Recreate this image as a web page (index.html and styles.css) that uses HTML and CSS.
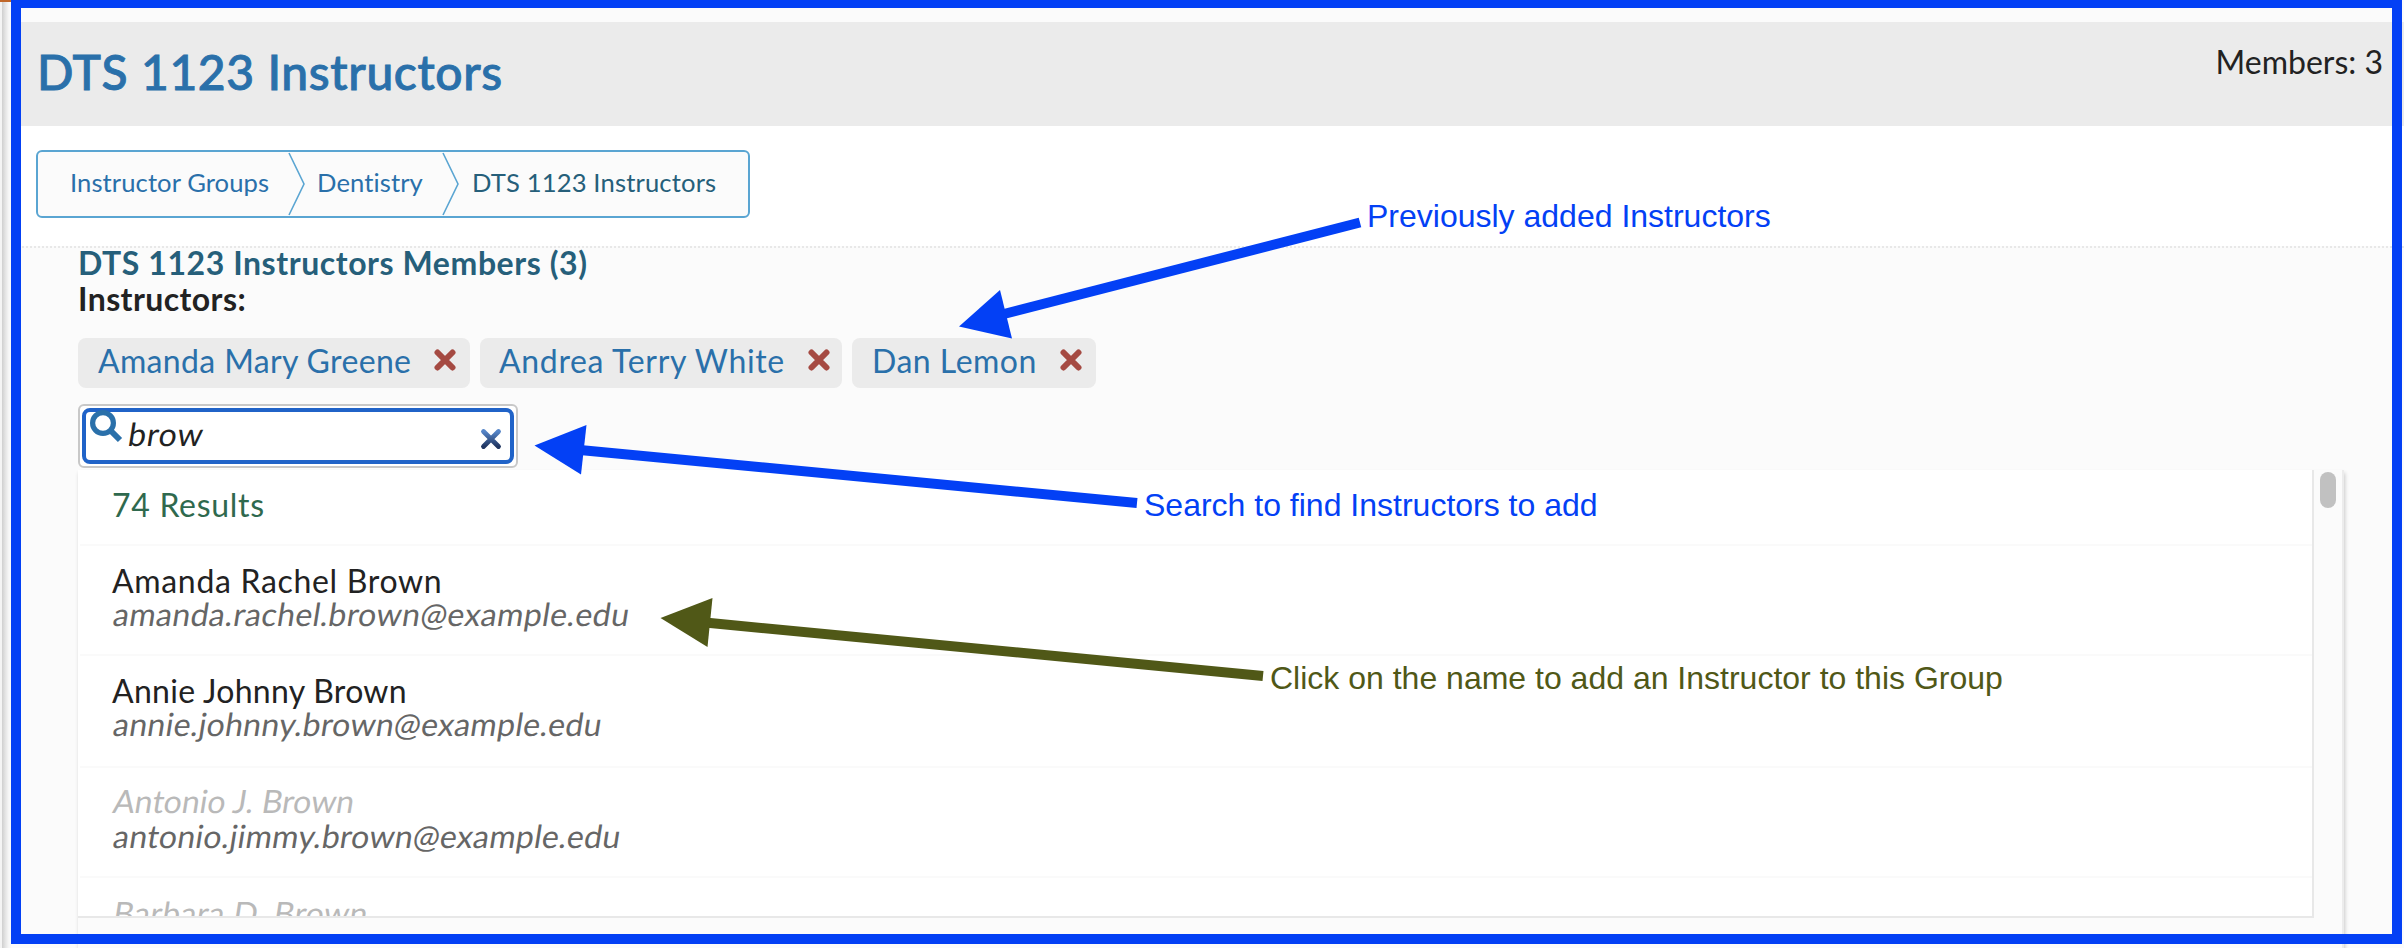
FILE: index.html
```html
<!DOCTYPE html>
<html lang="en">
<head>
<meta charset="utf-8">
<title>DTS 1123 Instructors</title>
<link rel="stylesheet" href="styles.css">
</head>
<body>
<svg class="defs" width="0" height="0">
  <defs>
    <linearGradient id="clear" x1="0" y1="0" x2="0" y2="1"><stop offset="0" stop-color="#5585c8"/><stop offset="1" stop-color="#203560"/></linearGradient>
    <symbol id="cross" viewBox="0 0 22 22"><path d="M3.500 3.500 18.500 18.500M18.500 3.500 3.500 18.500" fill="none" stroke-width="6" stroke-linecap="round"/></symbol>
  </defs>
</svg>
<div class="gutter"></div>
<main class="page">
  <header class="title-bar">
    <h1>DTS 1123 Instructors</h1>
    <span class="count">Members: 3</span>
  </header>
  <nav class="crumb-area">
    <div class="crumbs">
      <a class="c1">Instructor Groups</a>
      <svg class="chev" width="18" height="64" viewBox="0 0 18 64"><path d="M1 1 16 32 1 63"/></svg>
      <a class="c2">Dentistry</a>
      <svg class="chev" width="18" height="64" viewBox="0 0 18 64"><path d="M1 1 16 32 1 63"/></svg>
      <span class="c3">DTS 1123 Instructors</span>
    </div>
  </nav>
  <section class="members">
    <h2>DTS 1123 Instructors Members (3)</h2>
    <h3>Instructors:</h3>
    <div class="chips">
      <div class="chip chip-a"><span>Amanda Mary Greene</span><svg class="x"><use href="#cross"/></svg></div>
      <div class="chip chip-b"><span>Andrea Terry White</span><svg class="x"><use href="#cross"/></svg></div>
      <div class="chip chip-c"><span>Dan Lemon</span><svg class="x"><use href="#cross"/></svg></div>
    </div>
    <div class="search">
      <div class="field">
        <svg class="glass" width="34" height="34" viewBox="0 0 34 34"><circle cx="14" cy="14" r="10.4" stroke-width="5.2"/><path d="M22 22 31 31" stroke-width="6"/></svg>
        <span class="query slant">brow</span>
        <svg class="clear" width="22" height="22" viewBox="0 0 22 22"><path d="M3.500 3.500 18.500 18.500M18.500 3.500 3.500 18.500" fill="none" stroke="url(#clear)" stroke-width="4.8" stroke-linecap="round"/></svg>
      </div>
    </div>
    <div class="dropdown">
      <div class="list">
        <div class="row total">74 Results</div>
        <div class="row"><span class="n1">Amanda Rachel Brown</span><span class="mail slant m1">amanda.rachel.brown@example.edu</span></div>
        <div class="row tall"><span class="n2">Annie Johnny Brown</span><span class="mail slant m2">annie.johnny.brown@example.edu</span></div>
        <div class="row off"><span class="name slant n3">Antonio J. Brown</span><span class="mail slant m3">antonio.jimmy.brown@example.edu</span></div>
        <div class="row"><span class="name slant n4">Barbara D. Brown</span></div>
      </div>
      <div class="track"><div class="thumb"></div></div>
    </div>
  </section>
</main>
<div class="frame"></div>
<svg class="arrows" width="2404" height="948" viewBox="0 0 2404 948">
  <g fill="#0340f5" stroke="#0340f5">
    <path d="M1360 222.500 1000 315" stroke-width="10"/><path d="M959 326.500 1000 290 1012 338.500Z" stroke="none"/>
    <path d="M1137 503 580 450" stroke-width="10"/><path d="M534.500 445.500 586.500 425 581 474.500Z" stroke="none"/>
  </g>
  <g fill="#505817" stroke="#505817"><path d="M1263 676 705 622.500" stroke-width="10"/><path d="M660.500 618 712.500 598 707.500 647Z" stroke="none"/></g>
</svg>
<div class="note note-a">Previously added Instructors</div>
<div class="note note-b">Search to find Instructors to add</div>
<div class="note note-c">Click on the name to add an Instructor to this Group</div>
</body>
</html>
```
FILE: styles.css
```css
* { box-sizing: border-box; }
body {
  margin: 0;
  width: 2404px;
  height: 948px;
  overflow: hidden;
  display: flex;
  position: relative;
  background: #fbfbfb;
  color: #222;
  font: 32px/34px Lato, "Noto Sans", sans-serif;
}
h1, h2, h3 { margin: 0; }
.defs { position: absolute; }
.gutter {
  width: 11px;
  height: 948px;
  flex: none;
  border-top: 2px solid #c0672a;
  background: linear-gradient(90deg, #f4f4f4 2px, #cfcfcf 2px, #e2e2e2 5px, #f8f8f8 9px);
}
.page { width: 2393px; flex: none; padding-top: 22px; }
.title-bar {
  height: 104px;
  padding: 20px 21px 0 26px;
  display: flex;
  justify-content: space-between;
  background: #ebebeb;
}
h1 {
  color: #2a70aa;
  font-size: 48px;
  font-weight: 500;
  line-height: 60px;
  letter-spacing: .6px;
  -webkit-text-stroke: .9px #2a70aa;
}
.count { line-height: 40px; }
.crumb-area { height: 120px; padding: 24px 0 0 25px; background: #fff; }
.crumbs {
  width: 714px;
  height: 68px;
  border: 2px solid #5aa5d2;
  border-radius: 6px;
  background: #fbfbfb;
  display: flex;
  font-size: 25.6px;
  line-height: 60px;
  color: #2a70aa;
  padding-left: 32px;
}
.c1 { width: 218px; letter-spacing: .08px; }
.c2 { width: 124px; letter-spacing: .1px; margin-left: 11px; }
.c3 { margin-left: 12px; color: #265f7a; letter-spacing: .15px; white-space: nowrap; }
.chev { flex: none; fill: none; stroke: #5aa5d2; stroke-width: 1.6; }
.c2 + .chev { margin-left: 1px; }
.members { border-top: 2px dotted #e8e8e8; padding-left: 67px; height: 702px; background: #fbfbfb; }
h2 { font-size: 32px; line-height: 30px; color: #265f7a; letter-spacing: .57px; }
h3 { font-size: 32px; line-height: 42px; letter-spacing: .42px; }
.chips { display: flex; gap: 10px; margin-top: 18px; }
.chip {
  height: 50px;
  padding: 0 14px 0 20px;
  display: flex;
  justify-content: space-between;
  background: #ebebeb;
  color: #2a70aa;
  border-radius: 8px;
  line-height: 45px;
}
.chip-a { width: 392px; letter-spacing: .35px; }
.chip-b { width: 362px; letter-spacing: .67px; padding: 0 12px 0 19px; }
.chip-c { width: 244px; letter-spacing: .5px; }
.x { width: 22px; height: 22px; margin-top: 11px; stroke: #a54a42; }
.search {
  width: 440px;
  height: 64px;
  margin-top: 16px;
  padding: 2px;
  border: 2px solid #c8c8c8;
  border-radius: 6px;
  background: #fff;
}
.field {
  height: 56px;
  border: 4px solid #2063c8;
  border-radius: 8px;
  display: flex;
  padding-left: 3px;
}
.glass { flex: none; margin-top: -3px; fill: none; stroke: #2a70aa; }
.query { margin-left: 3px; line-height: 44px; width: 354px; letter-spacing: .8px; }
.clear { flex: none; margin-top: 16px; }
.slant { transform: skewX(-9deg); transform-origin: 0 80%; }
.dropdown {
  margin-top: 2px;
  width: 2266px;
  height: 500px;
  display: flex;
  border-right: 2px solid #ececec;
  box-shadow: 1px 3px 4px rgba(0, 0, 0, .2);
}
.list {
  width: 2236px;
  height: 448px;
  border-right: 2px solid #e8e8e8;
  border-bottom: 2px solid #e8e8e8;
  background: #fff;
  padding-left: 2px;
  overflow: hidden;
}
.row {
  height: 110px;
  padding: 18px 0 0 32px;
  border-bottom: 2px solid #fafafa;
  display: flex;
  flex-direction: column;
}
.total { height: 76px; line-height: 34px; color: #2f694e; letter-spacing: .7px; }
.tall { height: 112px; }
.off { padding-top: 16px; }
.off .mail { line-height: 37px; }
.name { color: #b9b9b9; }
.mail { color: #666; margin-top: -1px; }
.n1 { letter-spacing: .68px; }
.n2 { letter-spacing: .3px; }
.n4 { letter-spacing: .35px; }
.m1 { letter-spacing: .4px; }
.m2 { letter-spacing: .3px; }
.m3 { letter-spacing: .27px; }
.track { width: 28px; padding: 2px 0 0 6px; }
.thumb { width: 16px; height: 36px; border-radius: 8px; background: #c1c1c1; }
.frame {
  position: absolute;
  left: 11px;
  top: 0;
  width: 2391px;
  height: 944px;
  border: solid #0340f5;
  border-width: 8px 10px 10px;
}
.arrows { position: absolute; left: 0; top: 0; }
.note {
  position: absolute;
  font: 32px/36px "Liberation Sans", Arial, sans-serif;
  color: #0340f5;
  white-space: nowrap;
}
.note-a { left: 1367px; top: 198px; }
.note-b { left: 1144px; top: 487px; }
.note-c { left: 1270px; top: 660px; color: #505817; }
```
